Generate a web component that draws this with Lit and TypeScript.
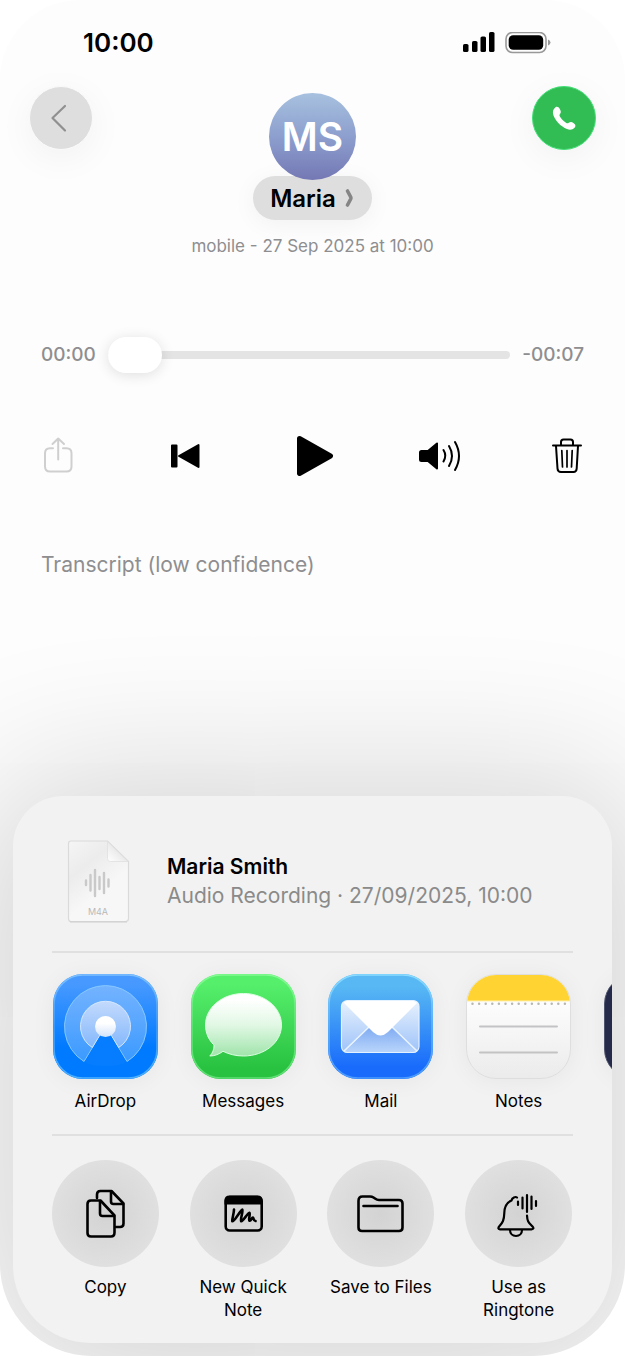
import { LitElement, html, svg, css, nothing } from "lit";
import { customElement, property, state } from "lit/decorators.js";

const tileStroke = (id: string) => svg`
  <rect x="1" y="1" width="103" height="103" rx="29" fill="none" stroke="url(#${id})" stroke-width="1.6"/>`;

const icons = {
  airdrop: html`<svg viewBox="0 0 105 105" aria-hidden="true">
    <defs>
      <linearGradient id="ad-bg" x1="0" y1="0" x2="0" y2="1"><stop offset=".1" stop-color="#4799ff"/><stop offset=".7" stop-color="#007aff"/></linearGradient>
      <linearGradient id="ad-edge" x1="0" y1="0" x2="0" y2="1"><stop offset="0" stop-color="#7cc0ff"/><stop offset=".5" stop-color="#3d9dff"/><stop offset="1" stop-color="#4db0ff"/></linearGradient>
      <linearGradient id="ad-outer" x1="0" y1="0" x2="0" y2="1"><stop offset="0" stop-color="#74b3ff"/><stop offset="1" stop-color="#3b9aff"/></linearGradient>
      <linearGradient id="ad-inner" x1="0" y1="0" x2="0" y2="1"><stop offset="0" stop-color="#c3dafc"/><stop offset="1" stop-color="#84b8fc"/></linearGradient>
      <linearGradient id="ad-dot" x1="0" y1="0" x2="0" y2="1"><stop offset=".35" stop-color="#fff"/><stop offset="1" stop-color="#d3e3fb"/></linearGradient>
    </defs>
    <rect width="105" height="105" rx="30" fill="url(#ad-bg)"/>${tileStroke("ad-edge")}
    <path d="M31 87.500A41 41 0 1 1 74 87.500L58 61H47Z" fill="url(#ad-outer)" stroke="#86c8ff" stroke-width="1" stroke-linejoin="round"/>
    <path d="M39.300 73.500A25 25 0 1 1 65.700 73.500L58 61H47Z" fill="url(#ad-inner)" stroke="#d5e8ff" stroke-width="1" stroke-linejoin="round"/>
    <path d="M32.500 87L47.500 61H57.500L72.500 87Q72 92 52.500 92T32.500 87Z" fill="#067dff"/>
    <circle cx="52.500" cy="52.500" r="10.500" fill="url(#ad-dot)"/>
  </svg>`,
  messages: html`<svg viewBox="0 0 105 105" aria-hidden="true">
    <defs>
      <linearGradient id="ms-bg" x1="0" y1="0" x2="0" y2="1"><stop offset=".1" stop-color="#56ef6c"/><stop offset=".9" stop-color="#29c140"/></linearGradient>
      <linearGradient id="ms-edge" x1="0" y1="0" x2="0" y2="1"><stop offset="0" stop-color="#84fa93"/><stop offset=".5" stop-color="#5be673"/><stop offset="1" stop-color="#5fdf74"/></linearGradient>
      <linearGradient id="ms-bub" x1="0" y1="0" x2="0" y2="1"><stop offset=".1" stop-color="#fff"/><stop offset=".5" stop-color="#e2f8e5"/><stop offset="1" stop-color="#a0e4ab"/></linearGradient>
    </defs>
    <rect width="105" height="105" rx="30" fill="url(#ms-bg)"/>${tileStroke("ms-edge")}
    <path d="M52.500 19.500C73.500 19.500 90.500 33.500 90.500 51C90.500 68.500 73.500 82 52.500 82C45 82 38 80.300 32 77.300C28 80.300 23.500 82 18.800 82C21.500 79.500 23.300 75 23 71C17.500 65.800 14.500 58.800 14.500 51C14.500 33.500 31.500 19.500 52.500 19.500Z" fill="url(#ms-bub)" stroke="#dcffe2" stroke-width="1" stroke-linejoin="round"/>
  </svg>`,
  mail: html`<svg viewBox="0 0 105 105" aria-hidden="true">
    <defs>
      <linearGradient id="ml-bg" x1="0" y1="0" x2="0" y2="1"><stop offset=".12" stop-color="#58b8f3"/><stop offset=".88" stop-color="#196cfb"/></linearGradient>
      <linearGradient id="ml-edge" x1="0" y1="0" x2="0" y2="1"><stop offset="0" stop-color="#8bdcff"/><stop offset=".5" stop-color="#5fb2fb"/><stop offset="1" stop-color="#4b9bff"/></linearGradient>
      <linearGradient id="ml-env" x1="0" y1="0" x2="0" y2="1"><stop offset="0" stop-color="#e8f2fd"/><stop offset="1" stop-color="#9dc2f9"/></linearGradient>
      <linearGradient id="ml-low" x1="0" y1="0" x2="0" y2="1"><stop offset="0" stop-color="#7fabf2"/><stop offset="1" stop-color="#b9d5fb"/></linearGradient>
    </defs>
    <rect width="105" height="105" rx="30" fill="url(#ml-bg)"/>${tileStroke("ml-edge")}
    <rect x="13.500" y="26.500" width="77.500" height="52" rx="6" fill="url(#ml-env)"/>
    <path d="M16 77.500L41 53H64L89 77.500Q88 78.500 85 78.500H19Q17 78.500 16 77.500Z" fill="url(#ml-low)"/>
    <path d="M16 77L41 53M89 77L64 53" stroke="#eaf4ff" stroke-width="1.600"/>
    <path d="M15.500 28.500Q17 26.500 20 26.500H85Q88 26.500 89.500 28.500L60 58Q52.500 65 45 58Z" fill="#fff"/>
    <rect x="13.500" y="26.500" width="77.500" height="52" rx="6" fill="none" stroke="#e4f1ff" stroke-width="1.200"/>
  </svg>`,
  notes: html`<svg viewBox="0 0 105 105" aria-hidden="true">
    <defs>
      <linearGradient id="nt-bg" x1="0" y1="0" x2="0" y2="1"><stop offset=".3" stop-color="#fcfcfc"/><stop offset="1" stop-color="#ebebeb"/></linearGradient>
      <clipPath id="nt-clip"><rect x="1" y="1" width="103" height="103" rx="29"/></clipPath>
    </defs>
    <rect x=".5" y=".5" width="104" height="104" rx="29.500" fill="url(#nt-bg)" stroke="#dedede"/>
    <g clip-path="url(#nt-clip)"><rect width="105" height="27" fill="#ffd432"/><path d="M0 27H105" stroke="#fff0a8" stroke-width="1"/></g>
    <path d="M6.500 29.700H102" stroke="#b9b7b0" stroke-width="2.500" stroke-linecap="round" stroke-dasharray="0 6.600"/>
    <path d="M14 52.500H91M14 78.500H91" stroke="#c3c3c5" stroke-width="2" stroke-linecap="round"/>
  </svg>`,
  dark: html`<svg viewBox="0 0 105 105" aria-hidden="true">
    <rect x=".5" y=".5" width="104" height="104" rx="29.500" fill="#25294a" stroke="#50556f"/>
  </svg>`,
  copy: html`<svg viewBox="0 0 107 107" aria-hidden="true"><g class="line">
    <path d="M45 38V34.500Q45 31 48.500 31H59.500L71.500 43.500V63.500Q71.500 67 68 67H64"/><path d="M59 31.500V41.500Q59 44 61.500 44H71"/>
    <path d="M39 40.500H48.500L62.500 55.500V72.500Q62.500 76.500 59 76.500H39Q35.500 76.500 35.500 73V44Q35.500 40.500 39 40.500Z"/><path d="M48 41V53.500Q48 56 50.500 56H62"/></g>
  </svg>`,
  quickNote: html`<svg viewBox="0 0 107 107" aria-hidden="true">
    <path d="M39.500 35.500H67.500Q72.500 35.500 72.500 40.500V44.500H34.500V40.500Q34.500 35.500 39.500 35.500Z"/>
    <g class="line"><rect x="35.700" y="37" width="36" height="33.500" rx="4"/>
    <path d="M44 49.500C44 54 41.800 59 42.300 61.300C44.500 61.800 50 50.500 52.300 49.700C53.300 51.500 50 59.500 51.200 61.300C53.300 61 57.500 53.300 59.500 52.800C60.600 54 58 60 59.500 60.800C61.300 60.500 61.600 57.700 63 57.500C63.800 58.500 63.500 60.800 65.500 61"/></g>
  </svg>`,
  folder: html`<svg viewBox="0 0 107 107" aria-hidden="true"><g class="line">
    <path d="M31.500 41V67.500Q31.500 71 35 71H72Q75.500 71 75.500 67.500V43.500Q75.500 40 72 40H52Q50 40 48 38.500L46.500 37.500Q45 36.500 43 36.500H35.500Q31.500 36.500 31.500 41Z"/><path d="M36.500 46H70.500"/></g>
  </svg>`,
  ringtone: html`<svg viewBox="0 0 107 107" aria-hidden="true"><g class="line thin">
    <path d="M52 37.500C50.500 36.300 47 37.500 46.500 40.500C41.500 42.500 39.500 47 39.300 53C39 61 37.500 62.500 34.500 66Q32 69 35 69.300H66.500Q69.700 69 67.500 66.500C64 62.500 62.300 62 62 55.500"/><path d="M45 70C45 73.500 47.500 76 51 76C54.500 76 57 73.500 57 70"/>
    <path d="M53 41.500V45M57.500 37.500V48.500M62 35V52M66.500 36.500V49M71 41V46"/></g>
  </svg>`,
};

@customElement("status-bar")
class StatusBar extends LitElement {
  static styles = css`
    :host { display: flex; align-items: center; justify-content: space-between; height: 86px; padding: 0 74px 0 83px; box-sizing: border-box; }
    .time { font-size: 26px; font-weight: 600; line-height: 32px; }
    svg { display: block; width: 88px; height: 22px; }
  `;
  render() {
    return html`<span class="time">10:00</span>
      <svg viewBox="0 0 88 22" role="img" aria-label="Signal and battery full">
        <rect x="0" y="12" width="5.500" height="8" rx="1.600"/><rect x="9" y="9" width="5.500" height="11" rx="1.600"/>
        <rect x="17.500" y="4.500" width="5.500" height="15.500" rx="1.600"/><rect x="26" y="0" width="5.500" height="20" rx="1.600"/>
        <rect x="43" y="0.500" width="40" height="20" rx="6.500" fill="none" stroke="#999" stroke-width="1.600"/>
        <rect x="45.700" y="3.200" width="34.500" height="14.600" rx="4.500"/>
        <path d="M85 7.500Q87.500 8.500 87.500 10.500T85 13.500Z" fill="#999"/>
      </svg>`;
  }
}

@customElement("contact-header")
class ContactHeader extends LitElement {
  static styles = css`
    :host { display: flex; align-items: flex-start; justify-content: space-between; padding: 0 29px; }
    button { font: inherit; border: 0; padding: 0; color: inherit; }
    .round { display: grid; place-items: center; width: 64px; height: 64px; border-radius: 50%; box-shadow: 0 8px 36px rgba(0, 0, 0, 0.05); }
    .round svg { width: 62px; height: 62px; display: block; }
    .back { background: #dedede; border: 1px solid #fafafa; }
    .call { background: #32bd54; border: 1px solid #43e078; }
    .who { display: flex; flex-direction: column; align-items: center; padding-top: 7px; }
    .avatar { display: grid; place-items: center; width: 87px; height: 87px; border-radius: 50%; background: linear-gradient(#a7c1df, #8d9fce 50%, #7478b4); color: #fff; font-size: 39px; font-weight: 600; line-height: 48px; z-index: 1; }
    .name { display: flex; align-items: center; gap: 9px; height: 44px; margin-top: -4px; padding: 0 18px 0 17px; border-radius: 22px; background: #dedede; font-size: 24px; font-weight: 600; box-shadow: 0 4px 24px rgba(0, 0, 0, 0.05); color: #000; }
    .name svg { flex: none; width: 9px; height: 20px; }
    .when { margin: 14px 0 0; font-size: 17px; line-height: 24px; color: #8e8e90; white-space: nowrap; }
  `;
  render() {
    return html`
      <button class="round back" aria-label="Back">
        <svg viewBox="0 0 62 62" fill="none" stroke="#909090" stroke-width="2.200" stroke-linecap="round" stroke-linejoin="round"><path d="M35 19L22.500 31L35 43.500"/></svg>
      </button>
      <div class="who">
        <div class="avatar">MS</div>
        <button class="name">Maria
          <svg viewBox="0 0 9 20" fill="none" stroke="#858585" stroke-width="3.600" stroke-linecap="round" stroke-linejoin="round" aria-hidden="true"><path d="M2.500 3L5.700 9Q6.200 10 5.700 11L2.500 17"/></svg>
        </button>
        <p class="when">mobile - 27 Sep 2025 at 10:00</p>
      </div>
      <button class="round call" aria-label="Call">
        <svg viewBox="1 1 62 62" fill="#fff"><path d="M23.500 21.300C25 20.300 26.700 21 27.800 23C29 25 29.200 26.600 28 28C27.200 29 27.300 29.600 28.200 31C29.800 33.300 31.700 35.200 34 36.700C35.200 37.500 35.900 37.400 36.800 36.700C38.500 35.600 40 36 41.700 37.200C43.700 38.600 44 40.200 42.600 41.700C40.600 43.800 37.900 44.200 35 43C28.700 40.300 24 35.600 21.500 29.500C20.300 26.300 20.900 23.200 23.500 21.300Z"/></svg>
      </button>`;
  }
}

@customElement("audio-player")
class AudioPlayer extends LitElement {
  @state() private position = 0;
  static styles = css`
    :host { display: block; }
    .scrub { display: flex; align-items: center; gap: 12px; padding: 0 41px; font-size: 19px; font-weight: 500; line-height: 24px; color: #8e8e90; }
    input { flex: 1; min-width: 0; height: 36px; margin: 0; appearance: none; background: none; }
    input::-webkit-slider-runnable-track { height: 8px; border-radius: 4px; background: #e4e4e4; }
    input::-webkit-slider-thumb { appearance: none; width: 54px; height: 36px; margin-top: -14px; border: 0; border-radius: 18px; background: #fff; box-shadow: 0 2px 14px rgba(0, 0, 0, 0.12); }
    .controls { display: flex; justify-content: space-between; padding: 61px 36px 0; }
    button { display: block; width: 44px; height: 44px; padding: 0; border: 0; background: none; }
    svg { display: block; width: 44px; height: 44px; fill: none; stroke: #000; stroke-width: 2; stroke-linecap: round; stroke-linejoin: round; }
    .solid { fill: #000; }
    .muted { stroke: #cfcfcf; }
  `;
  render() {
    return html`
      <div class="scrub">
        <span>00:00</span>
        <input type="range" min="0" max="7" aria-label="Playback position" .value=${String(this.position)}
          @input=${(e: Event) => (this.position = Number((e.target as HTMLInputElement).value))} />
        <span>-00:07</span>
      </div>
      <div class="controls">
        <button aria-label="Share" disabled><svg class="muted" viewBox="0 0 44 44"><path d="M17 14.300H14Q9 14.300 9 19.300V32.500Q9 37.500 14 37.500H30.500Q35.500 37.500 35.500 32.500V19.300Q35.500 14.300 30.500 14.300H27"/><path d="M22.200 25.500V5M16.500 10L22.200 4.500L28 10"/></svg></button>
        <button aria-label="Previous"><svg class="solid" viewBox="0 0 44 44"><path d="M9 11.500H13.500V32.500H9ZM16 22L35.500 11V33Z"/></svg></button>
        <button aria-label="Play"><svg class="solid" viewBox="0 0 44 44"><path stroke-width="5" d="M8.500 4.500L39.500 22L8.500 39.500Z"/></svg></button>
        <button aria-label="Speaker"><svg viewBox="0 0 44 44"><path class="solid" d="M3.500 17H10L19 9.500V34.500L10 27H3.500Q2 27 2 25.500V18.500Q2 17 3.500 17Z"/><path d="M25.500 16Q29 21.500 25.500 27.500M31 12Q37 22 31 32M37 8Q45 22 37 36"/></svg></button>
        <button aria-label="Delete"><svg viewBox="0 0 44 44"><path d="M8 11.500H36M16 11V8Q16 5.500 18.500 5.500H25.500Q28 5.500 28 8V11M11 12L12.500 34.500Q12.700 38 16 38H28.500Q31.500 38 31.700 34.500L33 12"/><path stroke-width="1.700" d="M16.800 16.500L17.500 33M22 16.500V33M27.200 16.500L26.500 33"/></svg></button>
      </div>`;
  }
}

@customElement("share-item")
class ShareItem extends LitElement {
  @property() label = "";
  @property() icon: keyof typeof icons = "copy";
  @property() kind: "app" | "action" = "app";
  static styles = css`
    :host { display: block; min-width: 0; }
    button { display: flex; flex-direction: column; align-items: center; width: 100%; padding: 0; border: 0; background: none; font: inherit; font-size: 17px; line-height: 23px; color: #000; }
    .art { display: block; width: 105px; height: 105px; margin-bottom: 11px; border-radius: 30px; box-shadow: 0 2px 24px rgba(0, 0, 0, 0.05); }
    .action { width: 107px; height: 107px; margin-bottom: 9px; border-radius: 50%; background: radial-gradient(circle, #d3d3d3 0%, #dcdcdc 50%, #e0e0e0 72%); box-shadow: none; }
    .art svg { display: block; width: 100%; height: 100%; }
    .line { fill: none; stroke: #000; stroke-width: 2.600; stroke-linecap: round; stroke-linejoin: round; }
    .thin { stroke-width: 2.200; }
  `;
  render() {
    return html`<button aria-label=${this.label || "More"}>
      <span class="art ${this.kind}">${icons[this.icon]}</span>
      ${this.label ? html`<span>${this.label}</span>` : nothing}
    </button>`;
  }
}

@customElement("share-sheet")
class ShareSheet extends LitElement {
  private apps = [
    { label: "AirDrop", icon: "airdrop" },
    { label: "Messages", icon: "messages" },
    { label: "Mail", icon: "mail" },
    { label: "Notes", icon: "notes" },
    { label: "", icon: "dark" },
  ];
  private actions = [
    { label: "Copy", icon: "copy" },
    { label: "New Quick Note", icon: "quickNote" },
    { label: "Save to Files", icon: "folder" },
    { label: "Use as Ringtone", icon: "ringtone" },
  ];
  static styles = css`
    :host { display: block; overflow: hidden; border-radius: 50px 50px 78px 78px; background: #f2f2f2; box-shadow: 0 10px 150px 30px rgba(0, 0, 0, 0.16); }
    .file { display: flex; align-items: center; gap: 36px; padding: 42px 39px 27px 53px; }
    .doc { display: block; flex: none; width: 65px; height: 86px; }
    .doc text { font-family: Inter, sans-serif; font-size: 9px; font-weight: 400; fill: #b9b9b9; }
    h2, p { margin: 0; font-size: 21px; line-height: 29px; }
    h2 { font-weight: 600; }
    p { color: #8a8a8a; }
    hr { height: 0; margin: 0 39px; border: 0; border-top: 2px solid #e0e0e0; }
    .row { display: grid; grid-auto-flow: column; grid-auto-columns: calc((100% - 93px) / 4); gap: 31px; padding: 21px 40px 21px 39px; overflow: hidden; }
    .row.actions { padding: 24px 40px 21px 39px; }
  `;
  render() {
    return html`
      <div class="file">
        <svg class="doc" viewBox="0 0 65 86" aria-hidden="true">
          <defs><linearGradient id="dc" x1="0" y1="0" x2=".6" y2="1"><stop offset="0" stop-color="#f5f5f5"/><stop offset=".35" stop-color="#ececec"/><stop offset=".7" stop-color="#f7f7f7"/></linearGradient>
          <linearGradient id="fold" x1="1" y1="0" x2="0" y2="1"><stop offset=".4" stop-color="#e6e6e6"/><stop offset="1" stop-color="#fff"/></linearGradient></defs>
          <path d="M5 3H41.500L62.500 23.500V80.500Q62.500 83.500 59.500 83.500H5Q2.500 83.500 2.500 80.500V5.500Q2.500 3 5 3Z" fill="url(#dc)" stroke="#dadada" stroke-width="1.200"/>
          <path d="M4 84H61" stroke="#cdcdcd" stroke-width="1"/>
          <path d="M41.500 3.500L62 23.500H44.500Q41.500 23.500 41.500 20.500Z" fill="url(#fold)" stroke="#e0e0e0" stroke-width=".8"/>
          <path d="M20 42.500V47M24.500 37V52.500M29 32V58M33.500 39V51M38 35V55M42.500 41.500V48.500" stroke="#c9c9c9" stroke-width="2.400" stroke-linecap="round"/>
          <text x="32" y="77" text-anchor="middle">M4A</text>
        </svg>
        <div><h2>Maria Smith</h2><p>Audio Recording · 27/09/2025, 10:00</p></div>
      </div>
      <hr />
      <div class="row">${this.apps.map((a) => html`<share-item kind="app" label=${a.label} icon=${a.icon}></share-item>`)}</div>
      <hr />
      <div class="row actions">${this.actions.map((a) => html`<share-item kind="action" label=${a.label} icon=${a.icon}></share-item>`)}</div>`;
  }
}

@customElement("app-root")
class AppRoot extends LitElement {
  static styles = css`
    :host { display: block; background: #fff; font-family: Inter, "Liberation Sans", sans-serif; color: #000; }
    .screen { display: flex; flex-direction: column; min-height: 100vh; box-sizing: border-box; border-radius: 80px 80px 92px 92px; background: #fdfdfd; overflow: hidden; }
    audio-player { margin-top: 79px; }
    .transcript { margin: 73px 41px 0; font-size: 21px; font-weight: 400; line-height: 28px; color: #8e8e90; }
    .tray { flex: 1; display: flex; flex-direction: column; justify-content: flex-end; padding: 200px 13px 13px; }
  `;
  render() {
    return html`<main class="screen">
      <status-bar></status-bar>
      <contact-header></contact-header>
      <audio-player></audio-player>
      <h1 class="transcript">Transcript (low confidence)</h1>
      <div class="tray"><share-sheet></share-sheet></div>
    </main>`;
  }
}
